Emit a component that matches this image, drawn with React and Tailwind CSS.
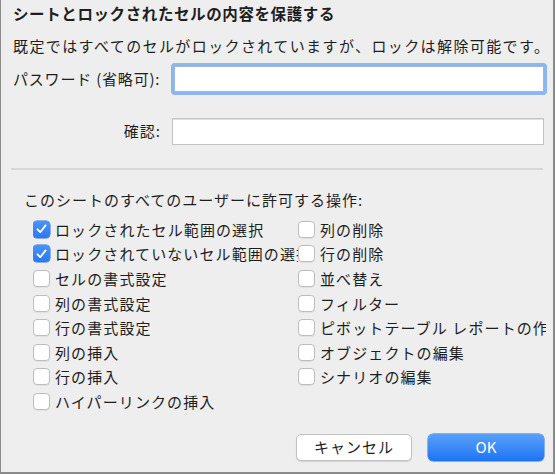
import React from "react";

const FONT = { fontFamily: '"Noto Sans CJK JP", "Noto Sans", sans-serif' };

const leftItems = [
  { label: "ロックされたセル範囲の選択", checked: true },
  { label: "ロックされていないセル範囲の選択", checked: true },
  { label: "セルの書式設定" },
  { label: "列の書式設定" },
  { label: "行の書式設定" },
  { label: "列の挿入" },
  { label: "行の挿入" },
  { label: "ハイパーリンクの挿入" },
];

const rightItems = [
  { label: "列の削除" },
  { label: "行の削除" },
  { label: "並べ替え" },
  { label: "フィルター" },
  { label: "ピボットテーブル レポートの作成" },
  { label: "オブジェクトの編集" },
  { label: "シナリオの編集" },
];

function Box({ checked }) {
  if (checked) {
    return (
      <span className="flex h-[17px] w-[17px] shrink-0 items-center justify-center rounded-[4px] bg-gradient-to-b from-[#4a93f8] to-[#2a78f2] shadow-[0_0_0_0.5px_#2a6fd8]">
        <svg width="11" height="10" viewBox="0 0 11 10" fill="none">
          <path d="M1.5 5.3 L4.2 8.2 L9.6 1.4" stroke="white" strokeWidth="1.8" strokeLinecap="round" strokeLinejoin="round" />
        </svg>
      </span>
    );
  }
  return <span className="h-[17px] w-[17px] shrink-0 rounded-[4px] border border-[#bdbdbd] bg-white shadow-[0_1px_0_rgba(0,0,0,0.05)]" />;
}

function Row({ label, checked }) {
  return (
    <div className="flex h-[24.6px] items-center gap-[5px] overflow-hidden whitespace-nowrap">
      <Box checked={checked} />
      <span className="text-[15px] leading-none tracking-[1.1px] text-[#1e1e1e]">{label}</span>
    </div>
  );
}

export default function App() {
  return (
    <div className="bg-white">
      <div
        className="flex h-[474px] w-[555px] flex-col border-b-2 border-l border-r-2 border-[#8a8a8a] bg-[#eeeeee] text-[#1e1e1e]"
        style={FONT}
      >
        <div className="pl-[12px] pt-[3px] text-[15.5px] font-bold leading-[20px] tracking-[0.6px]">
          シートとロックされたセルの内容を保護する
        </div>
        <div className="mt-[13px] pl-[12px] text-[15px] leading-[20px] tracking-[1.4px]">
          既定ではすべてのセルがロックされていますが、ロックは解除可能です。
        </div>

        <div className="mt-[7px] flex items-center">
          <div className="w-[163px] pl-[12px] text-[15px] tracking-[0.8px] whitespace-nowrap">パスワード (省略可):</div>
          <div className="ml-[7px] h-[32px] w-[376px] rounded-[4px] bg-[#8bb6f2] p-[3px]">
            <div className="h-full w-full border border-[#9ab8e0] bg-white" />
          </div>
        </div>

        <div className="mt-[23px] flex items-center">
          <div className="w-[161px] pr-[1px] text-right text-[15px] tracking-[1px]">確認:</div>
          <div className="ml-[10px] h-[27px] w-[372px] border border-[#c4c4c4] bg-white shadow-[inset_0_1px_0_#e0e0e0]" />
        </div>

        <div className="mx-[10px] mt-[23px] h-[2px] bg-[#d8d8d8]" />

        <div className="mt-[20px] pl-[23px] text-[15px] leading-[20px] tracking-[1px]">
          このシートのすべてのユーザーに許可する操作:
        </div>

        <div className="mt-[7px] flex pl-[32px]">
          <div className="w-[265px] overflow-hidden">
            {leftItems.map((it) => (
              <Row key={it.label} {...it} />
            ))}
          </div>
          <div className="w-[248px] overflow-hidden">
            {rightItems.map((it) => (
              <Row key={it.label} {...it} />
            ))}
          </div>
        </div>

        <div className="mt-auto mb-[11px] flex justify-end gap-[16px] pr-[9px]">
          <button className="h-[27px] w-[116px] rounded-[5px] border border-[#c2c2c2] bg-white text-[15px] tracking-[1px] text-[#1e1e1e] shadow-[0_1px_1px_rgba(0,0,0,0.12)]">
            キャンセル
          </button>
          <button className="h-[27px] w-[116px] rounded-[5px] bg-gradient-to-b from-[#58a0fa] to-[#1c74f2] text-[15px] text-white shadow-[0_0_0_0.5px_#2a6ed8]">
            OK
          </button>
        </div>
      </div>
    </div>
  );
}
